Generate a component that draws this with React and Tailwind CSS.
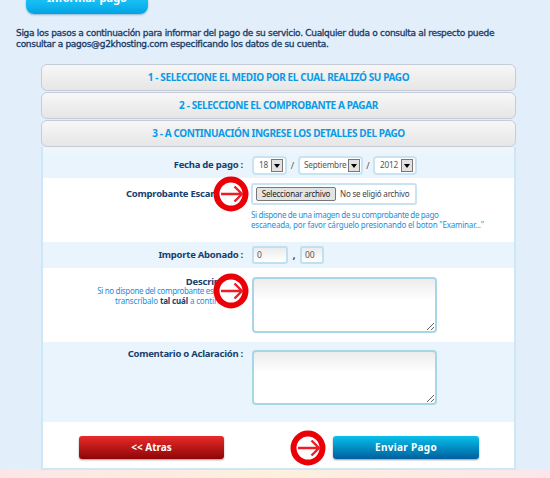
const font = { fontFamily: '"Noto Sans", Verdana, sans-serif' };

function Arrow({ className }) {
  return (
    <svg className={className} width="36" height="36" viewBox="0 0 36 36" fill="none">
      <circle cx="18" cy="18" r="14.5" fill="#fff" stroke="#ec0008" strokeWidth="6" />
      <path d="M8 18H29M21.5 10.5L29 18L21.5 25.5" stroke="#ee1c25" strokeWidth="2.4" />
    </svg>
  );
}

function Header({ children }) {
  return (
    <div className="h-[27px] rounded-[6px] border border-[#c5ccd8] bg-gradient-to-b from-[#f7f7f7] to-[#e6e6e6] flex items-center justify-center text-[10px] tracking-[-0.4px] font-bold text-[#0a9ae6]">
      {children}
    </div>
  );
}

function Select({ value, width }) {
  return (
    <div className={`${width} h-[19px] bg-white border-2 border-[#c8e4f2] rounded-[4px] flex items-center justify-between pl-[4px] pr-[2px] text-[8.2px] tracking-[-0.2px] text-[#555]`}>
      <span className="flex-1 text-center whitespace-nowrap">{value}</span>
      <span className="w-[12px] h-[13px] bg-[#e2e2e2] border border-[#777] flex items-center justify-center ml-[2px] shrink-0">
        <span className="w-0 h-0 border-x-[3px] border-x-transparent border-t-[4px] border-t-black" />
      </span>
    </div>
  );
}

function Label({ children, className = "" }) {
  return <div className={`w-[200px] text-right text-[9.5px] tracking-[-0.25px] font-bold text-[#17406d] shrink-0 ${className}`}>{children}</div>;
}

function Area({ className }) {
  return (
    <textarea
      className={`w-[185px] block bg-gradient-to-b from-[#ececec] via-white via-40% to-white border-2 border-[#a9d6e6] rounded-[4px] outline-none ${className}`}
    />
  );
}

export default function App() {
  return (
    <div className="w-[550px] h-[478px] overflow-hidden bg-[#e3eefb] flex flex-col" style={font}>
      <div className="ml-[26px] w-[122px] h-[14px] overflow-hidden rounded-b-[8px] bg-gradient-to-b from-[#18c0f4] to-[#02a3e4] shadow-[0_1px_2px_#8fb4cf] flex items-start justify-center text-[11px] leading-[14px] font-bold text-white shrink-0">
        <span className="-mt-[9px]">Informar pago</span>
      </div>

      <p className="ml-[16px] mt-[14px] w-[520px] text-[9px] tracking-[-0.3px] leading-[11px] whitespace-nowrap text-[#173a63] h-[36px] shrink-0 [-webkit-text-stroke:0.3px_#173a63]" style={{ fontFamily: '"DejaVu Sans", sans-serif' }}>
        Siga los pasos a continuación para informar del pago de su servicio. Cualquier duda o consulta al respecto puede
        <br />
        consultar a pagos@g2khosting.com especificando los datos de su cuenta.
      </p>

      <div className="ml-[41px] w-[475px] flex flex-col gap-px shrink-0">
        <Header>1 - SELECCIONE EL MEDIO POR EL CUAL REALIZÓ SU PAGO</Header>
        <Header>2 - SELECCIONE EL COMPROBANTE A PAGAR</Header>
        <Header>3 - A CONTINUACIÓN INGRESE LOS DETALLES DEL PAGO</Header>

        <div className="relative -mt-px border-x-2 border-b-2 border-[#cfe6f5] bg-white">
          <div className="h-[6px] bg-[#eef6fc]" />

          <div className="h-[25px] bg-[#eaf4fc] flex items-center">
            <Label>Fecha de pago :</Label>
            <div className="ml-[9px] flex items-center text-[9px] text-[#555]">
              <Select value="18" width="w-[35px]" />
              <span className="w-[11px] text-center">/</span>
              <Select value="Septiembre" width="w-[65px]" />
              <span className="w-[10px] text-center">/</span>
              <Select value="2012" width="w-[44px]" />
            </div>
          </div>

          <div className="h-[64px] flex pt-[5px]">
            <div className="pt-[4px]">
              <Label>Comprobante Escaneado :</Label>
            </div>
            <div className="ml-[8px]">
              <div className="w-[166px] h-[22px] border-2 border-[#c8e4f2] rounded-[3px] flex items-center pl-[3px] text-[8px] tracking-[-0.2px] text-[#444] whitespace-nowrap">
                <span className="w-[80px] h-[14px] bg-[#e4e4e4] border border-[#777] rounded-[2px] flex items-center justify-center text-[#222] shrink-0">
                  Seleccionar archivo
                </span>
                <span className="ml-[4px]">No se eligió archivo</span>
              </div>
              <div className="mt-[5px] text-[8px] leading-[10px] text-[#1c8fdc] whitespace-nowrap">
                <div className="tracking-[-0.35px]">Si dispone de una imagen de su comprobante de pago</div>
                <div className="tracking-[-0.2px]">escaneada, por favor cárguelo presionando el boton "Examinar..."</div>
              </div>
            </div>
          </div>

          <div className="h-[26px] bg-[#eaf4fc] flex items-center">
            <Label>Importe Abonado :</Label>
            <div className="ml-[9px] flex items-center text-[11px] text-[#555]">
              <div className="w-[36px] h-[18px] border-2 border-[#bfe0ee] rounded-[3px] bg-gradient-to-b from-[#ececec] to-white pl-[3px] text-[8.5px] leading-[14px]">0</div>
              <span className="w-[12px] text-center font-bold">,</span>
              <div className="w-[24px] h-[18px] border-2 border-[#bfe0ee] rounded-[3px] bg-gradient-to-b from-[#ececec] to-white pl-[3px] text-[8.5px] leading-[14px]">00</div>
            </div>
          </div>

          <div className="h-[74px] flex pt-[9px]">
            <div className="w-[200px] shrink-0 text-right -mt-[1px]">
              <div className="text-[9.5px] tracking-[-0.25px] leading-[12px] font-bold text-[#17406d]">Descripción :</div>
              <div className="-mt-[2px] text-[8px] leading-[10px] text-[#1c8fdc] whitespace-nowrap">
                <div className="tracking-[-0.35px]">Si no dispone del comprobante escaneado</div>
                <div className="tracking-[-0.15px]">
                  transcríbalo <b className="text-[#17406d]">tal cuál</b> a continuación
                </div>
              </div>
            </div>
            <Area className="ml-[9px] h-[56px]" />
          </div>

          <div className="h-[80px] bg-[#eaf4fc] flex pt-[8px]">
            <Label className="leading-[8px]">Comentario o Aclaración :</Label>
            <Area className="ml-[9px] h-[55px]" />
          </div>

          <div className="h-[46px] flex items-start pt-[14px] pl-[36px] gap-[109px]">
            <div className="w-[145px] h-[23px] rounded-[3px] bg-gradient-to-b from-[#ea2a2a] to-[#8e0505] shadow-[0_1px_2px_#999] flex items-center justify-center text-[10px] font-bold text-white">
              &lt;&lt; Atras
            </div>
            <div className="w-[146px] h-[23px] rounded-[3px] bg-gradient-to-b from-[#0cc0ea] to-[#035f9e] shadow-[0_1px_2px_#999] flex items-center justify-center text-[10px] tracking-[0.3px] font-bold text-white">
              Enviar Pago
            </div>
          </div>

          <Arrow className="absolute left-[170px] top-[29px]" />
          <Arrow className="absolute left-[170px] top-[126px]" />
          <Arrow className="absolute left-[247px] top-[283px]" />
        </div>
      </div>

      <div className="flex-1 bg-gradient-to-r from-[#fbe6e6] via-[#fdf0dc] to-[#fbe6ea]" />
    </div>
  );
}
